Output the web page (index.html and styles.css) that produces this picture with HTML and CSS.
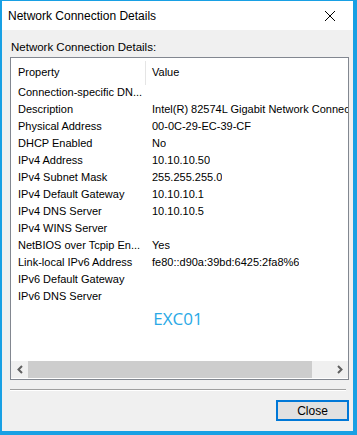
FILE: index.html
```html
<!DOCTYPE html>
<html lang="en">
<head>
  <meta charset="UTF-8">
  <title>Network Connection Details</title>
  <link rel="stylesheet" href="styles.css">
</head>
<body>
  <div class="window">
    <!-- Title bar -->
    <div class="titlebar">
      <span class="title">Network Connection Details</span>
      <svg class="close-x" width="12" height="12" viewBox="0 0 12 12">
        <path d="M1 1 L11 11 M11 1 L1 11" stroke="#000" stroke-width="1" fill="none"/>
      </svg>
    </div>

    <div class="content">
      <div class="label">Network Connection Details:</div>

      <div class="listbox">
        <div class="list-header">
          <div class="col-prop">Property</div>
          <div class="col-sep"></div>
          <div class="col-val">Value</div>
        </div>
        <div class="rows">
          <div class="row"><div class="col-prop">Connection-specific DN...</div><div class="col-val"></div></div>
          <div class="row"><div class="col-prop">Description</div><div class="col-val">Intel(R) 82574L Gigabit Network Connection</div></div>
          <div class="row"><div class="col-prop">Physical Address</div><div class="col-val">00-0C-29-EC-39-CF</div></div>
          <div class="row"><div class="col-prop">DHCP Enabled</div><div class="col-val">No</div></div>
          <div class="row"><div class="col-prop">IPv4 Address</div><div class="col-val">10.10.10.50</div></div>
          <div class="row"><div class="col-prop">IPv4 Subnet Mask</div><div class="col-val">255.255.255.0</div></div>
          <div class="row"><div class="col-prop">IPv4 Default Gateway</div><div class="col-val">10.10.10.1</div></div>
          <div class="row"><div class="col-prop">IPv4 DNS Server</div><div class="col-val">10.10.10.5</div></div>
          <div class="row"><div class="col-prop">IPv4 WINS Server</div><div class="col-val"></div></div>
          <div class="row"><div class="col-prop">NetBIOS over Tcpip En...</div><div class="col-val">Yes</div></div>
          <div class="row"><div class="col-prop">Link-local IPv6 Address</div><div class="col-val">fe80::d90a:39bd:6425:2fa8%6</div></div>
          <div class="row"><div class="col-prop">IPv6 Default Gateway</div><div class="col-val"></div></div>
          <div class="row"><div class="col-prop">IPv6 DNS Server</div><div class="col-val"></div></div>
          <div class="hostname">EXC01</div>
        </div>
        <div class="hscroll">
          <div class="arrow">
            <svg width="8" height="9" viewBox="0 0 8 9"><path d="M6 1 L2.5 4.5 L6 8" stroke="#606060" stroke-width="2" fill="none"/></svg>
          </div>
          <div class="track"><div class="thumb"></div></div>
          <div class="arrow">
            <svg width="8" height="9" viewBox="0 0 8 9"><path d="M2 1 L5.5 4.5 L2 8" stroke="#606060" stroke-width="2" fill="none"/></svg>
          </div>
        </div>
      </div>

      <div class="separator"></div>

      <div class="buttons">
        <button class="btn-close">Close</button>
      </div>
    </div>
  </div>
</body>
</html>
```

FILE: styles.css
```css
* {
  box-sizing: border-box;
}
body {
  margin: 0;
  font-family: 'Liberation Sans', Arial, sans-serif;
  font-size: 12px;
  color: #000;
}
/* Window frame */
.window {
  width: 357px;
  height: 435px;
  border-style: solid;
  border-color: #18a0e4;
  border-width: 1px 4px 4px 2px;
  background: #f0f0f0;
  display: flex;
  flex-direction: column;
}
.titlebar {
  height: 29px;
  background: #fff;
  display: flex;
  align-items: center;
  justify-content: space-between;
  padding: 0 17px 0 6px;
}
.title {
  font-size: 12px;
  padding-top: 1px;
}
.content {
  flex: 1;
  display: flex;
  flex-direction: column;
  padding: 10px 4px 0 8px;
}
.label {
  height: 17px;
  font-size: 11.5px;
  line-height: 14px;
  padding-left: 1px;
}
/* List view */
.listbox {
  height: 323px;
  border: 1px solid #828790;
  background: #fff;
  display: flex;
  flex-direction: column;
  font-size: 11px;
}
.list-header {
  height: 27px;
  display: flex;
  align-items: center;
}
.list-header .col-prop {
  width: 134px;
  padding-left: 7px;
}
.col-sep {
  width: 1px;
  height: 24px;
  background: #e5e5e5;
  margin-top: 2px;
}
.list-header .col-val {
  padding-left: 6px;
}
.rows {
  flex: 1;
  margin-top: -1px;
  overflow: hidden;
}
.row {
  display: flex;
  height: 17px;
  line-height: 17px;
  white-space: nowrap;
}
.row .col-prop {
  width: 134px;
  flex-shrink: 0;
  padding-left: 7px;
}
.row .col-val {
  padding-left: 7px;
  overflow: hidden;
}
.hostname {
  text-align: center;
  font-family: 'Open Sans', sans-serif;
  font-size: 17px;
  color: #2aa9e6;
  margin-top: 2px;
  padding-right: 3px;
}
/* Horizontal scrollbar */
.hscroll {
  height: 17px;
  display: flex;
  background: #f0f0f0;
  margin-bottom: 1px;
}
.arrow {
  width: 17px;
  display: flex;
  align-items: center;
  justify-content: center;
}
.track {
  flex: 1;
  display: flex;
}
.thumb {
  width: 284px;
  background: #cdcdcd;
}
.separator {
  background: #a0a0a0;
  margin: 9px 3px 0 0;
  border-bottom: 1px solid #fff;
  height: 2px;
}
.buttons {
  display: flex;
  justify-content: flex-end;
  margin-top: 9px;
}
.btn-close {
  width: 73px;
  height: 21px;
  border: 2px solid #0078d7;
  background: #e1e1e1;
  font-family: 'Liberation Sans', Arial, sans-serif;
  font-size: 12px;
  padding: 0;
}
```
